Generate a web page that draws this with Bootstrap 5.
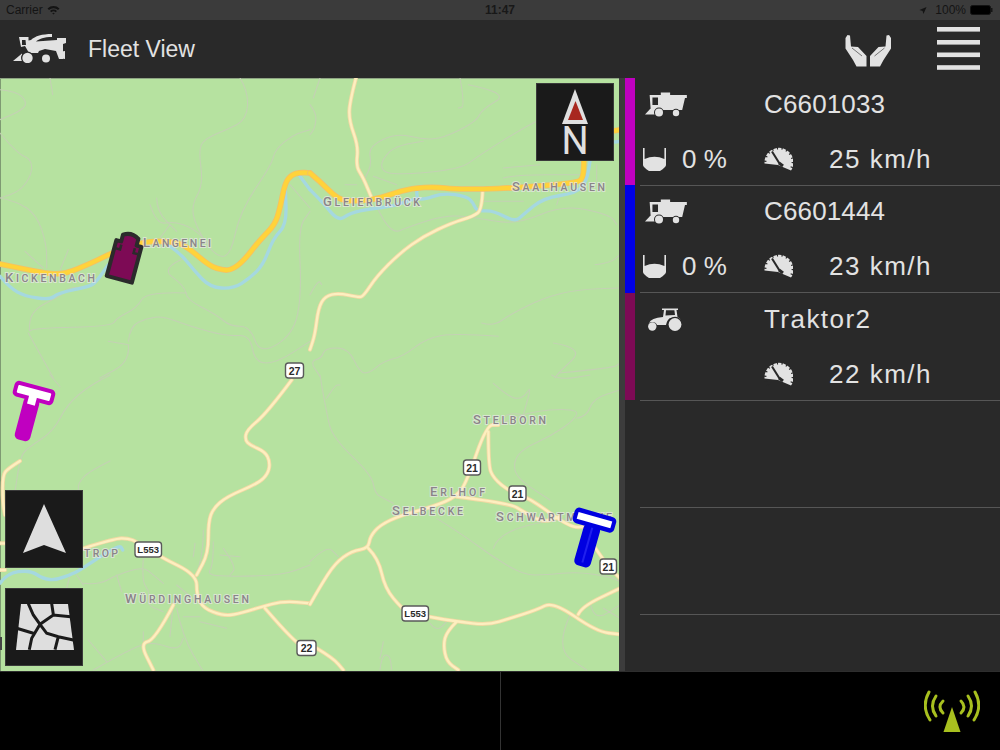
<!DOCTYPE html>
<html lang="en">
<head>
<meta charset="utf-8">
<title>Fleet View</title>
<link href="https://cdn.jsdelivr.net/npm/bootstrap@5.3.0/dist/css/bootstrap.min.css" rel="stylesheet">
<style>
html,body{margin:0;height:100%;background:#000;overflow:hidden}
body{font-family:"Liberation Sans",Arial,sans-serif;color:#e2e2e2}
.fv-app{width:1000px;height:750px}
.fv-status{height:20px;background:#3b3b3b;color:#141414;font-size:12px;padding:0 7px 0 6px;position:relative}
.fv-time{position:absolute;left:0;right:0;top:0;line-height:20px;text-align:center;font-weight:700;pointer-events:none;color:#181818}
.fv-head{height:58px;background:#292929;padding:0 20px 0 13px}
.fv-title{font-size:23px;color:#e2e2e2;margin-left:21px}
.fv-logo{margin-top:-2px}
.fv-hands{margin-right:45px;margin-top:3px}
.fv-main{height:593px}
.fv-mapwrap{width:619px;height:593px;background:#b6e2a0;position:relative;overflow:hidden}
.fv-mapwrap>svg.fv-map{display:block;width:619px;height:593px}
.fv-gut{width:6px;background:#3c3c3c}
.fv-panel{width:375px;background:#292929}
.fv-row{height:107px}
.fv-tall{height:108px}
.fv-bar{width:10px;flex:none}
.fv-c1{background:#c000c0}.fv-c2{background:#0000e6}.fv-c3{background:#7d0a55}
.fv-body{margin-left:5px;flex:1;border-bottom:1px solid #565656;display:grid;grid-template-columns:124px 1fr;grid-template-rows:52px 55px}
.fv-over .fv-body{margin-bottom:-1px;position:relative;z-index:1}
.fv-cell{display:flex;align-items:center;font-size:26px;line-height:1;color:#e2e2e2;white-space:nowrap}
.fv-lo{padding-top:3px}
.fv-ml{padding-left:5px;padding-top:2px}
.fv-trac{padding-left:8px;padding-top:1px}
.fv-hop{margin-left:3px}
.fv-sp{width:65px;flex:none;display:flex}
.fv-speed{letter-spacing:1.5px}
.fv-wide{letter-spacing:1.45px}
.fv-id{letter-spacing:.15px}
.fv-pct{margin-left:16px}
.fv-btn{position:absolute;width:78px;height:78px;background:#1a1a1a;outline:1px solid #3a3a3a;outline-offset:-1px;display:flex;align-items:center;justify-content:center}
.fv-btn svg{overflow:visible}
.fv-n{font-family:Roboto,"Liberation Sans",sans-serif;font-weight:400;font-size:38px;fill:#e0e0e0;text-anchor:middle}
.fv-north{left:536px;top:5px}.fv-nav{left:5px;top:412px}.fv-mapbtn{left:5px;top:510px}
.fv-foot{height:79px;background:#000;border-top:1px solid #2e2e2e}
.fv-half{width:500px;height:100%}
.fv-half+.fv-half{border-left:1px solid #333;padding:0 20px 0 0}
.fv-ant{margin-top:2px}
.rd-g{fill:none;stroke:#c4d1b4;stroke-width:3.2;stroke-linejoin:round;stroke-linecap:round}
.rd-wo{fill:none;stroke:#f1d9a3;stroke-width:12;stroke-linejoin:round;stroke-linecap:round}
.rd-wi{fill:none;stroke:#fdefc0;stroke-width:7;stroke-linejoin:round;stroke-linecap:round}
.rd-yo{fill:none;stroke:#f3c068;stroke-width:17;stroke-linejoin:round;stroke-linecap:round}
.rd-yi{fill:none;stroke:#ffd33a;stroke-width:12.5;stroke-linejoin:round;stroke-linecap:round}
.rd-b{fill:none;stroke:#a5d8e0;stroke-width:10;stroke-linejoin:round;stroke-linecap:round}
.lbl{font-family:Roboto,"Liberation Sans",Arial,sans-serif;font-size:10.5px;fill:#8a8488;stroke:#e8e8e8;stroke-width:2px;stroke-opacity:.7;paint-order:stroke;font-weight:500}
.lbl tspan{font-size:13px}
.sh rect{fill:#fff;stroke:#5a5a5a;stroke-width:1.4}
.sh text{font-family:"Liberation Sans",Arial,sans-serif;font-size:10.5px;font-weight:700;fill:#2a2a2a;text-anchor:middle}
.sh text.shl{font-size:9.5px}
</style>
</head>
<body>
<svg width="0" height="0" class="position-absolute">
<defs>
<symbol id="ic-comb" viewBox="0 0 42 26">
<path fill-rule="evenodd" fill="#e2e2e2" d="M5 3H17V0.5H27V3H45V6H43L40 18H8V16H6ZM8 5.5V13H14V5.5Z" transform="scale(.93 1)"/>
<path fill="#e2e2e2" d="M0 22.5L6 16H11V22.5Z"/>
<circle cx="14" cy="20.5" r="5" fill="#292929"/><circle cx="14" cy="20.5" r="4" fill="#e2e2e2"/>
<circle cx="31" cy="21" r="4.2" fill="#292929"/><circle cx="31" cy="21" r="3.2" fill="#e2e2e2"/>
</symbol>
<symbol id="ic-hop" viewBox="0 0 23 23">
<path fill="#e2e2e2" d="M0 0H1.6V11Q11.5 6.5 21.4 11V0H23V17Q23 19 17 23H6Q0 19 0 17Z"/>
</symbol>
<symbol id="ic-speed" viewBox="0 0 29 24">
<path fill="#e2e2e2" d="M0.5 15A14.5 14.5 0 1 1 27 23.5L14 18L0.5 16.5Z"/>
<circle cx="15" cy="15" r="13.8" fill="none" stroke="#292929" stroke-width="2.4" stroke-dasharray="1.2 3.6"/>
<path d="M8 4.5L15.5 16.5" stroke="#292929" stroke-width="2"/>
<path d="M15 16L19 19" stroke="#292929" stroke-width="3"/>
</symbol>
<symbol id="ic-trac" viewBox="0 0 34 24">
<path fill-rule="evenodd" fill="#e2e2e2" d="M1 15Q3 10 15 9L16 2H14V.5H30V2H28.5L29.5 9Q32 10 33 12L22 10Q19 12 18 17H9Q8 14 4 14Q2 14 1 15ZM18 2.2L17.5 7.5Q21 7 27 7L26.4 2.2Z"/>
<circle cx="27" cy="16.5" r="7.8" fill="#292929"/><circle cx="27" cy="16.5" r="6.4" fill="#e2e2e2"/>
<circle cx="4.3" cy="18.5" r="4.2" fill="#e2e2e2"/>
</symbol>
</defs>
</svg>
<div class="fv-app d-flex flex-column">
  <div class="fv-status d-flex align-items-center justify-content-between">
    <div class="d-flex align-items-center gap-1"><span>Carrier</span>
      <svg width="13" height="10" viewBox="0 0 13 10"><path d="M.5 3.5A8.5 8.5 0 0 1 12.5 3.5L11 5A6.4 6.4 0 0 0 2 5ZM3 6A5 5 0 0 1 10 6L8.7 7.3A3.2 3.2 0 0 0 4.3 7.3ZM5.2 8.2A2 2 0 0 1 7.8 8.2L6.5 9.6Z" fill="#141414"/></svg>
    </div>
    <div class="fv-time">11:47</div>
    <div class="d-flex align-items-center">
      <svg width="8" height="9" viewBox="0 0 9 9" class="me-2"><path d="M8.5 .5L5 8.5L4 5L.5 4Z" fill="#141414"/></svg>
      <span class="me-1">100%</span>
      <svg width="23" height="10" viewBox="0 0 23 10"><rect x=".5" y=".5" width="20" height="9" rx="2" fill="#000" stroke="#141414"/><rect x="21" y="3" width="1.5" height="4" fill="#141414"/></svg>
    </div>
  </div>
  <div class="fv-head d-flex align-items-center">
    <svg class="fv-logo" width="54" height="30" viewBox="0 0 54 30" aria-hidden="true">
      <path fill-rule="evenodd" fill="#e2e2e2" d="M6 4H15.5V7.5L18 7C22 3 29 1 39 1V4C31 4 26 6 23 8.5L44 7V5H53V10L50 11V26H46L43 18L32 16L26 18L25 20L16 20L12 13L8 14ZM9 7V12H13L12.5 7Z"/>
      <path fill="#e2e2e2" d="M0 28L9 20.5L10 28Z"/>
      <circle cx="14.5" cy="25" r="6.5" fill="#292929"/><circle cx="14.5" cy="25" r="5.2" fill="#e2e2e2"/>
      <circle cx="33" cy="25.5" r="5.2" fill="#292929"/><circle cx="33" cy="25.5" r="4" fill="#e2e2e2"/>
      <path d="M52 18A4 4 0 0 0 52 26Z" fill="#e2e2e2"/>
    </svg>
    <div class="fv-title flex-grow-1">Fleet View</div>
    <svg class="fv-hands" width="47" height="32" viewBox="0 0 47 32" aria-hidden="true">
      <g fill="#e2e2e2"><path d="M.5 3L2.5 0L5 .5L6 11.5L13 12L21.5 21V31.5H11.5L8 25L.5 13.5Z"/><path d="M7 13L17 21" stroke="#292929" stroke-width=".6"/></g>
      <g fill="#e2e2e2" transform="translate(46.5 0) scale(-1 1)"><path d="M.5 3L2.5 0L5 .5L6 11.5L13 12L21.5 21V31.5H11.5L8 25L.5 13.5Z"/><path d="M7 13L17 21" stroke="#292929" stroke-width=".6"/></g>
    </svg>
    <svg width="43" height="44" viewBox="0 0 43 44" aria-hidden="true">
      <g fill="#e2e2e2"><rect y="0" width="43" height="4.6"/><rect y="13" width="43" height="4.6"/><rect y="25.5" width="43" height="4.6"/><rect y="38.2" width="43" height="4.6"/></g>
    </svg>
  </div>
  <div class="fv-main d-flex">
    <div class="fv-mapwrap">
      <svg class="fv-map" viewBox="0 78 619 593" aria-label="Map">
        <rect x="0" y="78" width="619" height="593" fill="#b6e2a0"/>
        <rect x="0" y="78" width="1" height="593" fill="#7e9a72"/>
        <rect x="0" y="78" width="619" height="1" fill="#8ea483"/>
        <rect x="0" y="637" width="2" height="13" fill="#444"/>
        <g transform="translate(0 78) scale(.33333)">
          <path class="rd-g" d="M0,35L50,40L80,70L70,95L0,125M150,0L158,50M0,165L50,225L95,245L95,290L60,340L0,360M0,360L50,370L110,410L140,500L140,570M75,520L130,570M205,515L175,590M720,0L745,40L740,125L680,155L620,180L595,210L610,320L575,380L585,440L640,530L690,540L720,400L815,260L825,215L880,170L930,155M450,380L470,440L520,430L580,450L630,500M470,360L470,400L530,460M510,440L480,480M555,540L480,570L555,625L560,665L650,710L690,745L750,745L780,830L880,770L905,650L895,450L930,400M560,645L440,640L410,690L350,720L335,745L100,750L85,765L95,695L190,650L200,630L270,625M85,765L160,900M870,320L930,390M325,790L385,800M385,790L390,745L440,720L490,715L570,745L680,775L750,770L765,855L830,855L930,790M385,800L390,850L300,900"/>
          <path class="rd-b" d="M0,595L30,630L75,655L150,665L175,645L270,625L290,610L325,560M510,505L540,525L580,575L630,628L700,632L750,600L790,560L820,480L860,440L856,330M900,295L930,335"/>
          <path class="rd-yo" d="M0,558L60,570L130,585L190,590L275,555L335,525L430,490L520,490L560,505L630,565L670,577L695,575L730,550L780,485L825,440L840,390L855,315L875,290L900,283L930,285"/>
          <path class="rd-yi" d="M0,558L60,570L130,585L190,590L275,555L335,525L430,490L520,490L560,505L630,565L670,577L695,575L730,550L780,485L825,440L840,390L855,315L875,290L900,283L930,285"/>
        </g>
        <g transform="translate(310 78) scale(.33333)">
          <path class="rd-g" d="M0,80L20,105L15,150L0,170M30,0L10,60M450,0L465,85L445,90M475,20L600,45L515,95L500,130L400,180L340,185L260,165L175,205L185,260L165,300M340,190L260,200L215,245L215,280L260,290L450,275L510,230L640,150L680,130M580,300L620,290L810,290M190,295L260,320M105,320L140,320M205,395L240,470L300,445L410,410L500,420L620,440L760,380L900,410L920,440M520,370L640,370M580,270L690,260M740,380L750,350M860,260L860,310M0,650L25,605L35,620M515,735L550,745L600,710L700,660L800,635L930,630M565,775L440,765L350,780L280,835L220,850L180,885L150,885L115,810L45,810L35,840L0,850L30,895M730,795L825,810L745,885L735,900M745,885L910,870L930,855M855,560L900,555L930,530"/>
          <path class="rd-b" d="M0,335L40,375L85,430L120,405L180,392L250,385L320,360L340,365L400,345L470,355L490,375L500,400L550,397L615,432L640,410L700,360L800,345L830,310L840,250M915,192L930,190M320,340L322,362"/>
          <path class="rd-wo" d="M138,0L118,75L118,130L145,205L138,265L160,300L185,360M518,335L516,395L490,415L425,435L340,475L270,525L200,595L160,655L145,658L85,645L45,655L25,690L15,770L0,815"/>
          <path class="rd-wi" d="M138,0L118,75L118,130L145,205L138,265L160,300L185,360M518,335L516,395L490,415L425,435L340,475L270,525L200,595L160,655L145,658L85,645L45,655L25,690L15,770L0,815"/>
          <path class="rd-yo" d="M0,285L30,310L85,365L130,370L190,365L240,350L305,330L380,327L430,333L520,333L610,330L800,315L820,300L822,240M915,158L930,155"/>
          <path class="rd-yi" d="M0,285L30,310L85,365L130,370L190,365L240,350L305,330L380,327L430,333L520,333L610,330L800,315L820,300L822,240M915,158L930,155"/>
        </g>
        <g transform="translate(0 375) scale(.33333)">
          <path class="rd-g" d="M150,0L180,35M330,0L270,30L200,90L160,170L80,220L60,250L45,350M330,258L265,290L235,325L235,345M430,550L425,620L450,650L440,690L490,710M250,625L295,630L350,600L430,575L460,600L490,625M350,600L365,650M530,630L590,680M520,680L510,785M610,465L610,520L590,600M585,505L580,545M640,500L640,570L620,600L700,605L850,600L930,570M670,520L710,575L690,600M660,540L720,545M600,740L680,760M550,725L600,725M530,700L550,790L610,890M265,795L320,860M280,885L420,805L470,805L535,825L550,790M430,770L430,800M210,600L200,640M230,600L250,630"/>
          <path class="rd-b" d="M0,625L20,595L90,585L130,612L170,615L220,595L240,585L300,545L360,510L368,525"/>
          <path class="rd-wo" d="M60,258L25,280L8,300L8,380L15,420M0,505L15,505M0,585L15,585M875,15L800,115L740,165L735,195L750,210L795,230L810,260L805,295L775,325L680,365L640,400L625,440L625,535L590,600M250,520L345,490L385,490L410,500L480,545L590,600L590,660L610,700L670,722L710,718L780,697L850,678L930,685M520,690L465,795L420,805L460,885M795,700L890,810L930,820"/>
          <path class="rd-wi" d="M60,258L25,280L8,300L8,380L15,420M0,505L15,505M0,585L15,585M875,15L800,115L740,165L735,195L750,210L795,230L810,260L805,295L775,325L680,365L640,400L625,440L625,535L590,600M250,520L345,490L385,490L410,500L480,545L590,600L590,660L610,700L670,722L710,718L780,697L850,678L930,685M520,690L465,795L420,805L460,885M795,700L890,810L930,820"/>
        </g>
        <g transform="translate(310 375) scale(.33333)">
          <path class="rd-g" d="M30,0L50,120L70,190L185,300L195,355L220,370L250,385M50,70L75,30L90,30M380,430L460,480L540,540L640,600L710,600L800,590L900,605L930,620M550,520L560,490L640,450L780,430M550,25L600,70L640,70L665,30L640,120M725,0L750,15L840,0M640,120L600,110L570,140M570,150L640,110L800,100L800,130L720,185L640,220L610,260L620,310L720,375M800,130L830,125L850,70L930,45M0,560L50,510L85,545M210,850L220,800M210,885L215,840L240,840L245,885M360,745L380,770L410,740M780,720L735,820L830,885M840,680L850,740L930,690M880,700L930,730"/>
          <path class="rd-wo" d="M0,688L30,635L75,565L125,528L175,520L180,485L210,450L275,420L370,395L440,365L470,320L530,150L565,150M535,170L535,270L550,310L600,350L660,370L780,458L830,455M850,510L890,570L930,610M440,365L600,385L640,410L700,443L750,425M175,520L205,550L225,640L275,700L300,715L440,740L535,750L600,730L680,705L730,680L860,770L930,778M440,740L410,770L400,810L410,860L445,885M805,718L815,695L930,640M20,820L70,850L100,885"/>
          <path class="rd-wi" d="M0,688L30,635L75,565L125,528L175,520L180,485L210,450L275,420L370,395L440,365L470,320L530,150L565,150M535,170L535,270L550,310L600,350L660,370L780,458L830,455M850,510L890,570L930,610M440,365L600,385L640,410L700,443L750,425M175,520L205,550L225,640L275,700L300,715L440,740L535,750L600,730L680,705L730,680L860,770L930,778M440,740L410,770L400,810L410,860L445,885M805,718L815,695L930,640M20,820L70,850L100,885"/>
        </g>
        <text class="lbl" x="5" y="282" textLength="90"><tspan>K</tspan>ICKENBACH</text>
        <text class="lbl" x="143" y="247" textLength="68"><tspan>L</tspan>ANGENEI</text>
        <text class="lbl" x="323" y="206" textLength="97"><tspan>G</tspan>LEIERBRÜCK</text>
        <text class="lbl" x="512" y="191" textLength="93"><tspan>S</tspan>AALHAUSEN</text>
        <text class="lbl" x="473" y="424" textLength="73"><tspan>S</tspan>TELBORN</text>
        <text class="lbl" x="430" y="496" textLength="55"><tspan>E</tspan>RLHOF</text>
        <text class="lbl" x="392" y="515" textLength="71"><tspan>S</tspan>ELBECKE</text>
        <text class="lbl" x="496" y="521" textLength="116"><tspan>S</tspan>CHWARTMECKE</text>
        <text class="lbl" x="84" y="557" textLength="34">TROP</text>
        <text class="lbl" x="125" y="603" textLength="124"><tspan>W</tspan>ÜRDINGHAUSEN</text>
        <g class="sh">
          <rect x="285.500" y="363" width="18" height="15" rx="3"/><text x="294.500" y="374.500">27</text>
          <rect x="463.500" y="460" width="17" height="15" rx="3"/><text x="472" y="471.500">21</text>
          <rect x="509" y="486" width="17" height="15" rx="3"/><text x="517.500" y="497.500">21</text>
          <rect x="600" y="559" width="16.500" height="15" rx="3"/><text x="608.300" y="570.500">21</text>
          <rect x="135" y="542" width="26.500" height="15" rx="3"/><text class="shl" x="148.200" y="553.300">L553</text>
          <rect x="402" y="606" width="26.500" height="15" rx="3"/><text class="shl" x="415.200" y="617.300">L553</text>
          <rect x="297" y="640.500" width="19" height="15" rx="3"/><text x="306.500" y="652">22</text>
        </g>
        <g transform="rotate(15 34 393)">
          <rect x="13" y="385" width="42" height="16" rx="4.5" fill="#c000c0"/>
          <rect x="26" y="398" width="16" height="44" rx="5" fill="#c000c0"/>
          <rect x="17" y="389" width="34" height="8" rx="1" fill="#fff"/>
          <rect x="30" y="396" width="8" height="9" fill="#fff"/>
        </g>
        <g transform="rotate(16 594 520)">
          <rect x="573" y="512" width="43" height="16" rx="4.500" fill="#0000e0"/>
          <rect x="586" y="525" width="17" height="43" rx="5" fill="#0000e0"/>
          <rect x="577" y="516.500" width="35" height="7" fill="#fff"/>
          <rect x="593.500" y="528" width="2" height="36" fill="#2020ee"/>
        </g>
        <g transform="rotate(15 125 258)">
          <path d="M112 243H117V236Q125 231 133 236V243H138V280H112Z" fill="#7d0a55" stroke="#2b2b2b" stroke-width="4" stroke-linejoin="round"/>
          <path d="M112 251H118V246M138 251H132V246" fill="none" stroke="#2b2b2b" stroke-width="2.500"/>
        </g>
      </svg>
      <div class="fv-btn fv-north">
        <svg width="78" height="78" viewBox="0 0 78 78" aria-hidden="true">
          <path d="M39 6L52 41H26Z" fill="#e0e0e0"/><path d="M39.500 18L47 37H32Z" fill="#a8281f"/>
          <text class="fv-n" x="39" y="71">N</text>
        </svg>
      </div>
      <div class="fv-btn fv-nav">
        <svg width="78" height="78" viewBox="0 0 78 78" aria-hidden="true"><path d="M39 14L61 63L39 55L18 63Z" fill="#dedede"/></svg>
      </div>
      <div class="fv-btn fv-mapbtn">
        <svg width="78" height="78" viewBox="0 0 78 78" aria-hidden="true">
          <path d="M16 16H63L69 62H11Z" fill="#dedede"/>
          <path d="M23.300 15.700L28.300 27L35 36.300L26.700 50.300L24.300 61.700M11.700 40.300L28.300 45.300M46.700 15.700L48.300 26.300M35 36.300L48.300 27L65.700 28.700M35 36.300L41.700 45.300L53.300 48.700L68.300 52M53.300 48.700L50 61.700" fill="none" stroke="#1a1a1a" stroke-width="3"/>
        </svg>
      </div>
    </div>
    <div class="fv-gut"></div>
    <div class="fv-panel d-flex flex-column">
      <div class="fv-row fv-over d-flex"><div class="fv-bar fv-c1"></div><div class="fv-body">
        <div class="fv-cell fv-ml"><svg width="42" height="26"><use href="#ic-comb"/></svg></div><div class="fv-cell fv-id">C6601033</div>
        <div class="fv-cell fv-lo"><svg class="fv-hop" width="23" height="23"><use href="#ic-hop"/></svg><span class="fv-pct">0 %</span></div>
        <div class="fv-cell fv-lo"><span class="fv-sp"><svg width="29" height="24"><use href="#ic-speed"/></svg></span><span class="fv-speed">25 km/h</span></div>
      </div></div>
      <div class="fv-row fv-tall d-flex"><div class="fv-bar fv-c2"></div><div class="fv-body">
        <div class="fv-cell fv-ml"><svg width="42" height="26"><use href="#ic-comb"/></svg></div><div class="fv-cell fv-id">C6601444</div>
        <div class="fv-cell fv-lo"><svg class="fv-hop" width="23" height="23"><use href="#ic-hop"/></svg><span class="fv-pct">0 %</span></div>
        <div class="fv-cell fv-lo"><span class="fv-sp"><svg width="29" height="24"><use href="#ic-speed"/></svg></span><span class="fv-speed">23 km/h</span></div>
      </div></div>
      <div class="fv-row fv-over d-flex"><div class="fv-bar fv-c3"></div><div class="fv-body">
        <div class="fv-cell fv-trac"><svg width="34" height="24"><use href="#ic-trac"/></svg></div><div class="fv-cell fv-wide">Traktor2</div>
        <div class="fv-cell fv-lo"></div>
        <div class="fv-cell fv-lo"><span class="fv-sp"><svg width="29" height="24"><use href="#ic-speed"/></svg></span><span class="fv-speed">22 km/h</span></div>
      </div></div>
      <div class="fv-row fv-over d-flex"><div class="fv-bar"></div><div class="fv-body"></div></div>
      <div class="fv-row fv-over d-flex"><div class="fv-bar"></div><div class="fv-body"></div></div>
    </div>
  </div>
  <div class="fv-foot d-flex">
    <div class="fv-half"></div>
    <div class="fv-half d-flex align-items-center justify-content-end">
      <svg class="fv-ant" width="56" height="44" viewBox="0 0 56 44" aria-hidden="true">
        <path d="M28 17L36.500 42H19.500Z" fill="#a8c01f"/>
        <g fill="none" stroke="#a8c01f" stroke-width="3" stroke-linecap="round">
          <path d="M19 11Q13 17 19 23M37 11Q43 17 37 23"/>
          <path d="M12 6Q5 16 12 26M44 6Q51 16 44 26"/>
          <path d="M5 2Q-3 16 6 30M51 2Q59 16 50 30"/>
        </g>
      </svg>
    </div>
  </div>
</div>
<script src="https://cdn.jsdelivr.net/npm/bootstrap@5.3.0/dist/js/bootstrap.bundle.min.js"></script>
<script>
/* soften the traced map roads into curves */
document.querySelectorAll('.fv-map path[class^="rd-"]').forEach(function(p){
  var out='';
  p.getAttribute('d').split('M').filter(Boolean).forEach(function(sub){
    var n=sub.split('L').map(function(s){return s.split(',').map(Number);});
    out+='M'+n[0].join(',');
    for(var i=1;i<n.length-1;i++){
      out+='Q'+n[i].join(',')+' '+((n[i][0]+n[i+1][0])/2)+','+((n[i][1]+n[i+1][1])/2);
    }
    out+='L'+n[n.length-1].join(',');
  });
  p.setAttribute('d',out);
});
</script>
</body>
</html>
